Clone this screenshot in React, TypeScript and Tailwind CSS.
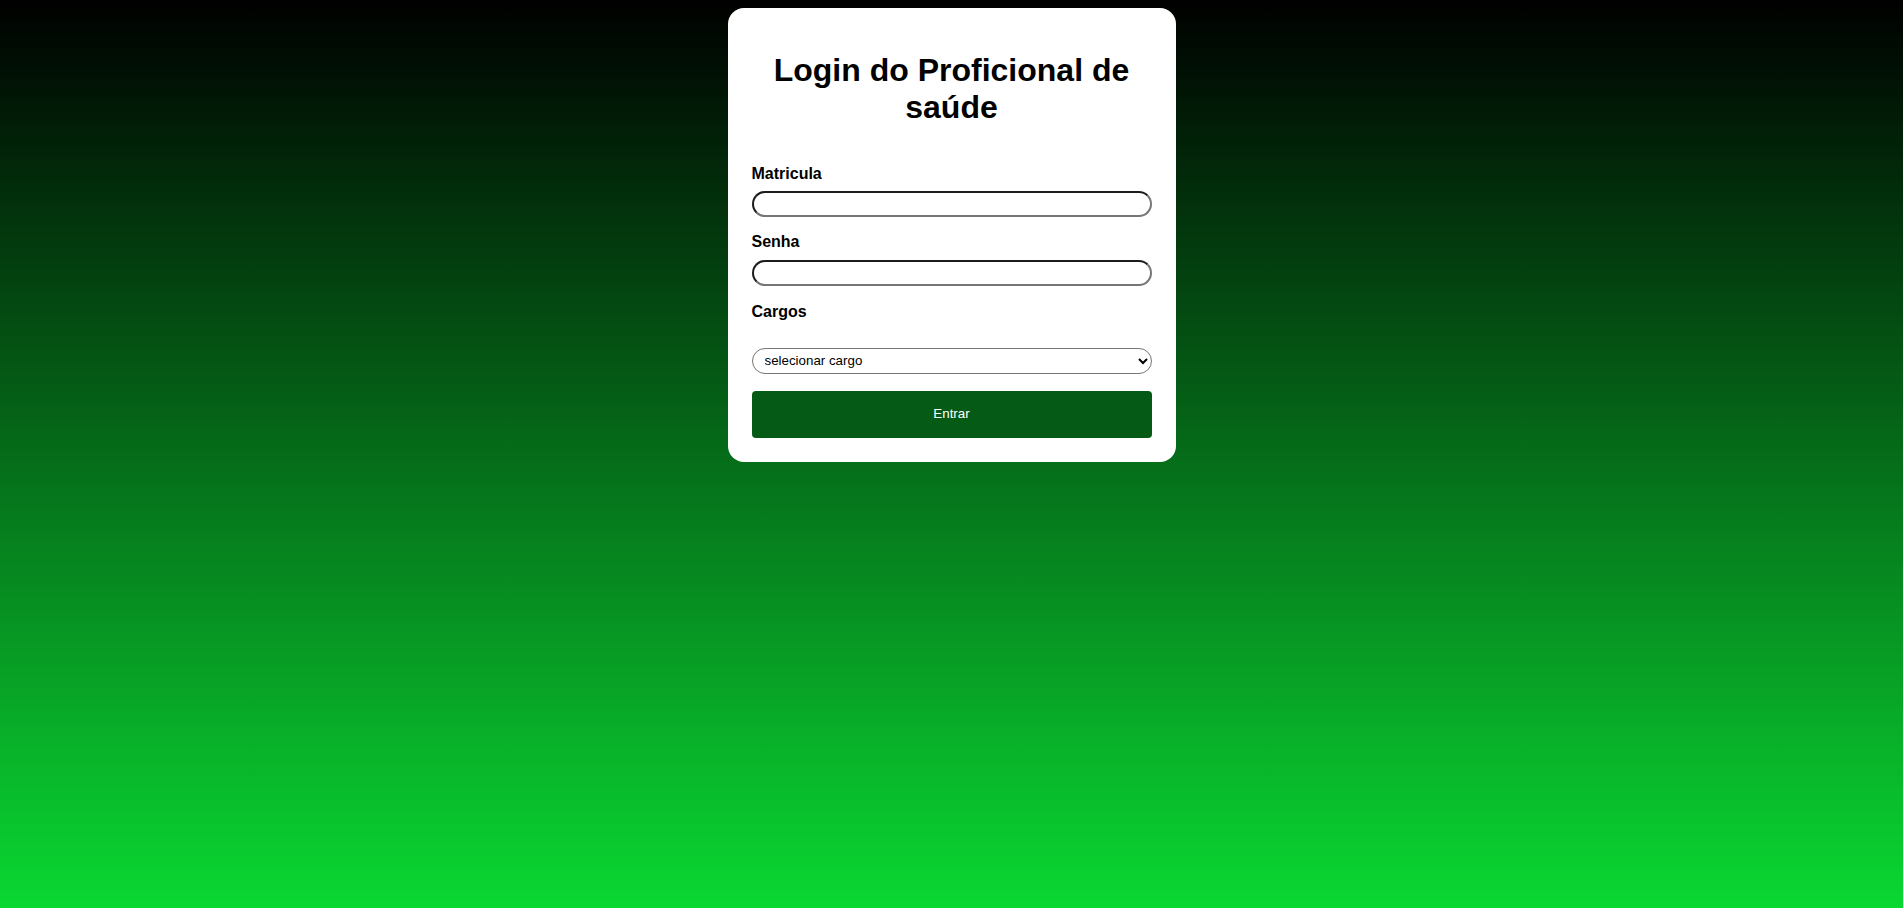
import React from "react";

export default function App() {
  const inputCls =
    "block w-full h-[26px] rounded-[13px] border-2 border-solid border-t-[#1c1c1c] border-l-[#1c1c1c] border-r-[#767676] border-b-[#767676] bg-white outline-none px-[6px] text-[13.333px]";
  return (
    <div
      className="min-h-[908px] w-full bg-[linear-gradient(to_bottom,#000000,#0ad832)] flex justify-center items-start pt-[8px]"
      style={{ fontFamily: '"Liberation Sans", Arial, sans-serif' }}
    >
      <div className="w-[448px] bg-white rounded-[16px] px-[24px] pt-[44px] pb-[24px]">
        <h1 className="text-[32px] font-bold text-center text-black leading-[36.8px]">
          Login do Proficional de saúde
        </h1>
        <form className="mt-[39px]" onSubmit={(e) => e.preventDefault()}>
          <label className="block text-[16px] font-bold text-black leading-[18.4px]">Matricula</label>
          <input type="text" className={inputCls + " mt-[8px]"} />
          <label className="block text-[16px] font-bold text-black leading-[18.4px] mt-[16px]">Senha</label>
          <input type="password" className={inputCls + " mt-[9px]"} />
          <label className="block text-[16px] font-bold text-black leading-[18.4px] mt-[17px]">Cargos</label>
          <select className="block w-full h-[26px] mt-[26px] rounded-[13px] border border-solid border-[#767676] bg-white pl-[8px] pr-[4px] text-[13.333px] text-black outline-none">
            <option>selecionar cargo</option>
            <option>Médico</option>
            <option>Enfermeiro</option>
          </select>
          <button
            type="submit"
            className="block w-full h-[47px] mt-[17px] rounded-[4px] bg-[#055a15] text-white text-[13.333px] cursor-pointer"
          >
            Entrar
          </button>
        </form>
      </div>
    </div>
  );
}
